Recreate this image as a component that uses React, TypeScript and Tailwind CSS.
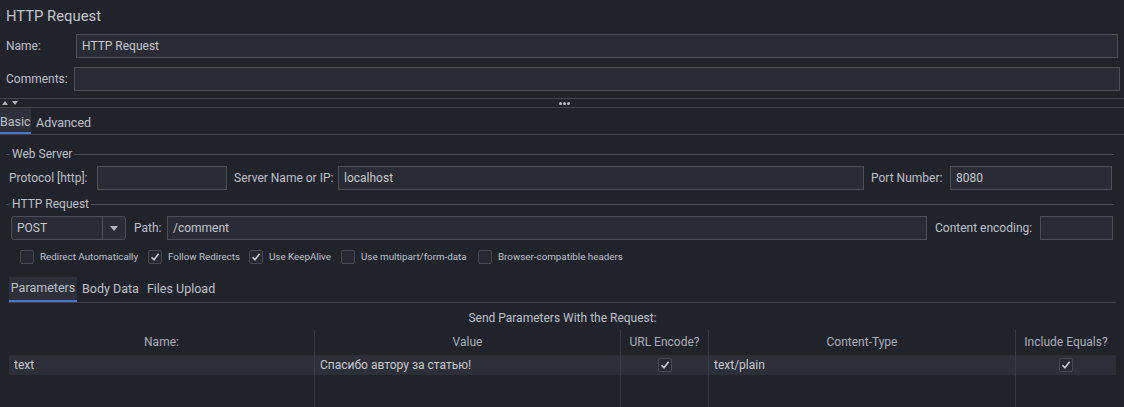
import React from "react";

const Input = ({ value = "", className = "" }: { value?: string; className?: string }) => (
  <div
    className={`h-[24px] flex items-center border border-[#4b4e56] bg-[#292c34] px-[5px] text-[12px] text-[#c4c7cd] whitespace-nowrap ${className}`}
  >
    {value}
  </div>
);

const Check = ({ checked }: { checked?: boolean }) => (
  <span className="w-[14px] h-[14px] shrink-0 flex items-center justify-center border border-[#464951] rounded-[2px] bg-[#262931]">
    {checked && (
      <svg width="10" height="10" viewBox="0 0 10 10">
        <path d="M1.5 5.2 L4 7.8 L8.6 1.8" fill="none" stroke="#c8cbd1" strokeWidth="1.6" />
      </svg>
    )}
  </span>
);

const Titled = ({ title }: { title: string }) => (
  <div className="flex items-center h-[16px] ml-[6px] mr-[10px]">
    <div className="w-[4px] h-px bg-[#4a4d55]" />
    <span className="px-[2px] text-[12px] leading-none">{title}</span>
    <div className="flex-1 h-px bg-[#4a4d55]" />
  </div>
);

const options = [
  { label: "Redirect Automatically", checked: false, w: "w-[128px]" },
  { label: "Follow Redirects", checked: true, w: "w-[101px]" },
  { label: "Use KeepAlive", checked: true, w: "w-[92px]" },
  { label: "Use multipart/form-data", checked: false, w: "w-[137px]" },
  { label: "Browser-compatible headers", checked: false, w: "w-[150px]" },
];

const columns = [
  { name: "Name:", w: "w-[305px]" },
  { name: "Value", w: "w-[306px]" },
  { name: "URL Encode?", w: "w-[88px]" },
  { name: "Content-Type", w: "w-[307px]" },
  { name: "Include Equals?", w: "flex-1" },
];

export default function App() {
  return (
    <div className="w-[1124px] h-[407px] overflow-hidden bg-[#21232b] text-[#bcc0c7] font-['Roboto',sans-serif] text-[12px] whitespace-nowrap">
      {/* header */}
      <div className="h-[32px] pl-[6px] flex items-center text-[14.8px] text-[#c3c6cc]">HTTP Request</div>
      <div className="flex items-center mt-[2px]">
        <span className="w-[76px] pl-[6px]">Name:</span>
        <Input value="HTTP Request" className="flex-1 mr-[6px]" />
      </div>
      <div className="flex items-center mt-[9px]">
        <span className="w-[74px] pl-[6px]">Comments:</span>
        <Input className="flex-1 mr-[4px]" />
      </div>

      {/* splitter */}
      <div className="mt-[7px] h-[10px] border-y border-[#42454d] relative flex items-center justify-center">
        <div className="absolute left-[2px] top-[2px] flex gap-[4px]">
          <span className="w-0 h-0 border-x-[3px] border-x-transparent border-b-[4px] border-b-[#aeb2b9]" />
          <span className="w-0 h-0 border-x-[3px] border-x-transparent border-t-[4px] border-t-[#aeb2b9]" />
        </div>
        <div className="flex gap-[1px] ml-[4px]">
          <span className="w-[3px] h-[3px] rounded-full bg-[#b4b8bf]" />
          <span className="w-[3px] h-[3px] rounded-full bg-[#b4b8bf]" />
          <span className="w-[3px] h-[3px] rounded-full bg-[#b4b8bf]" />
        </div>
      </div>

      {/* tabs */}
      <div className="flex h-[27px] border-b border-[#42454d] text-[12.5px]">
        <div className="w-[31px] flex items-center bg-[#2d3039] border-b-[2px] border-[#4c74c9] pt-[4px]">
          Basic
        </div>
        <div className="pl-[5px] flex items-center pt-[4px]">Advanced</div>
      </div>

      {/* web server */}
      <div className="mt-[11px]">
        <Titled title="Web Server" />
        <div className="flex items-center mt-[4px] pl-[9px]">
          <span className="w-[88px]">Protocol [http]:</span>
          <Input className="w-[130px]" />
          <span className="w-[111px] pl-[7px]">Server Name or IP:</span>
          <Input value="localhost" className="w-[526px]" />
          <span className="w-[86px] pl-[7px]">Port Number:</span>
          <Input value="8080" className="w-[162px]" />
        </div>
      </div>

      {/* http request */}
      <div className="mt-[6px]">
        <Titled title="HTTP Request" />
        <div className="flex items-center mt-[4px] pl-[11px]">
          <div className="w-[115px] h-[24px] flex border border-[#4b4e56] rounded-[3px] bg-[#292c34]">
            <span className="flex-1 flex items-center pl-[5px] text-[#c4c7cd]">POST</span>
            <span className="w-[23px] flex items-center justify-center border-l border-[#4b4e56]">
              <span className="w-0 h-0 border-x-[4px] border-x-transparent border-t-[5px] border-t-[#b0b4bb]" />
            </span>
          </div>
          <span className="w-[41px] pl-[8px]">Path:</span>
          <Input value="/comment" className="w-[760px]" />
          <span className="w-[113px] pl-[8px]">Content encoding:</span>
          <Input className="w-[73px]" />
        </div>
        <div className="flex items-center mt-[10px] pl-[20px] text-[9.8px]">
          {options.map((o) => (
            <label key={o.label} className={`${o.w} flex items-center gap-[6px]`}>
              <Check checked={o.checked} />
              <span>{o.label}</span>
            </label>
          ))}
        </div>
      </div>

      {/* sub tabs */}
      <div className="mx-[9px] mr-[8px] mt-[12px] flex h-[26px] border-b border-[#3d4048] text-[12.5px]">
        <div className="w-[68px] flex items-center justify-center bg-[#2d3039] border-b-[2px] border-[#4c74c9] pt-[1px]">
          Parameters
        </div>
        <div className="pl-[5px] flex items-center pt-[1px]">Body Data</div>
        <div className="pl-[8px] flex items-center pt-[1px]">Files Upload</div>
      </div>

      {/* parameters table */}
      <div className="mx-[9px] mr-[8px]">
        <div className="h-[27px] pt-[3px] flex items-center justify-center">Send Parameters With the Request:</div>
        <div className="flex h-[90px]">
          {columns.map((c, i) => (
            <div key={c.name} className={`${c.w} flex flex-col ${i > 0 ? "border-l border-[#383b43]" : ""}`}>
              <div className="h-[25px] flex items-center justify-center text-[#a8adb5]">{c.name}</div>
              <div className="h-[20px] flex items-center bg-[#2c2f37] px-[5px] text-[#c8cbd1]">
                {i === 0 && "text"}
                {i === 1 && "Спасибо автору за статью!"}
                {(i === 2 || i === 4) && (
                  <span className="w-full flex justify-center">
                    <Check checked />
                  </span>
                )}
                {i === 3 && "text/plain"}
              </div>
            </div>
          ))}
        </div>
      </div>
    </div>
  );
}
